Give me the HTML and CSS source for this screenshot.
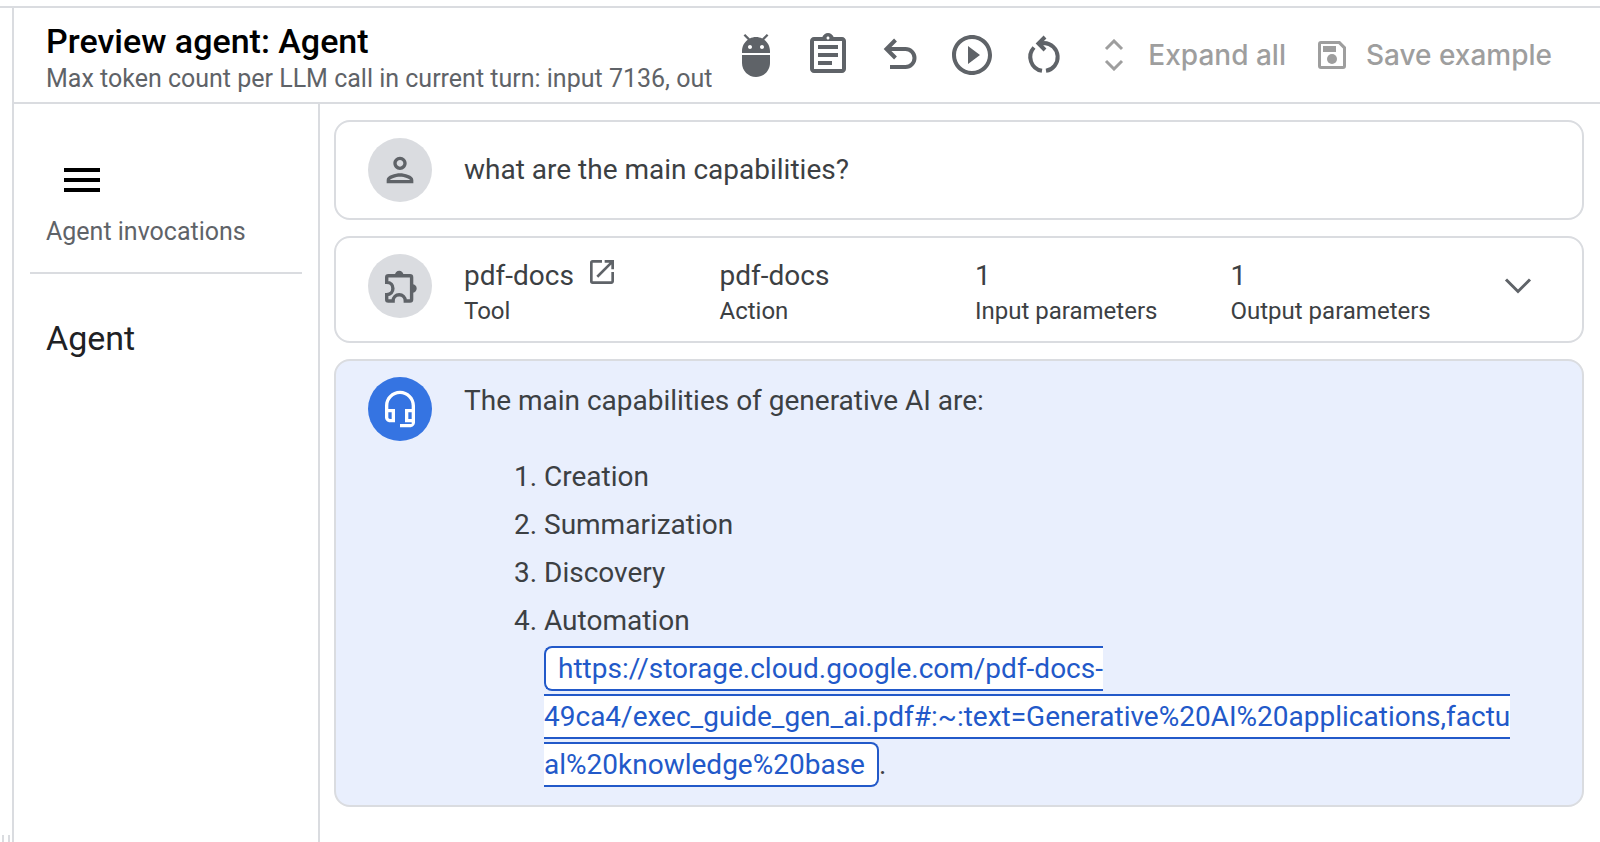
FILE: index.html
```html
<!DOCTYPE html>
<html lang="en">
<head>
<meta charset="utf-8">
<title>Preview agent</title>
<link rel="stylesheet" href="styles.css">
</head>
<body>
<div class="app">
  <div class="resizer"><span class="grip"></span></div>
  <div class="panel">
    <header class="header">
      <div class="heading">
        <h1 class="title">Preview agent: Agent</h1>
        <p class="subtitle">Max token count per LLM call in current turn: input 7136, out</p>
      </div>
      <div class="tools">
        <button class="icon-button" type="button" aria-label="Debug">
          <svg class="icon" viewBox="0 0 24 24"><path d="M5 16c0 3.87 3.13 7 7 7s7-3.13 7-7v-4H5v4zM16.12 4.37l2.1-2.1-.82-.83-2.3 2.31C14.16 3.28 13.12 3 12 3s-2.16.28-3.09.75L6.6 1.44l-.82.83 2.1 2.1C6.14 5.64 5 7.68 5 10v1h14v-1c0-2.32-1.14-4.36-2.88-5.63zM9 9c-.55 0-1-.45-1-1s.45-1 1-1 1 .45 1 1-.45 1-1 1zm6 0c-.55 0-1-.45-1-1s.45-1 1-1 1 .45 1 1-.45 1-1 1z"/></svg>
        </button>
        <button class="icon-button" type="button" aria-label="Original response">
          <svg class="icon" viewBox="0 0 24 24"><path d="M7 15h7v2H7zm0-4h10v2H7zm0-4h10v2H7zm12-4h-4.18C14.4 1.84 13.3 1 12 1c-1.3 0-2.4.84-2.82 2H5c-1.1 0-2 .9-2 2v14c0 1.1.9 2 2 2h14c1.1 0 2-.9 2-2V5c0-1.1-.9-2-2-2zm-7-.25c.41 0 .75.34.75.75s-.34.75-.75.75-.75-.34-.75-.75.34-.75.75-.75zM19 19H5V5h14v14z"/></svg>
        </button>
        <button class="icon-button" type="button" aria-label="Undo">
          <svg class="icon line" viewBox="0 0 48 48"><path d="M19.500 9l-9 9 9 9M11 18h18.500a9 9 0 0 1 0 18H14"/></svg>
        </button>
        <button class="icon-button" type="button" aria-label="Run">
          <svg class="icon" viewBox="0 0 24 24"><path d="M10 16.5l6-4.5-6-4.5v9zM12 2C6.48 2 2 6.48 2 12s4.48 10 10 10 10-4.48 10-10S17.52 2 12 2zm0 18c-4.41 0-8-3.59-8-8s3.59-8 8-8 8 3.59 8 8-3.59 8-8 8z"/></svg>
        </button>
        <button class="icon-button" type="button" aria-label="Restart">
          <svg class="icon line" viewBox="0 0 48 48"><path d="M24 12a14 14 0 0 1 2 27.800M22 39.800A14 14 0 0 1 14 16.500M25 6l-6.500 6.500 6.500 6.500M18 12.300h6"/></svg>
        </button>
        <button class="text-button" type="button" disabled>
          <svg class="small-icon line" viewBox="0 0 28 32"><path class="thin" d="M6 10l8-8 8 8M6 22l8 8 8-8"/></svg>
          <span>Expand all</span>
        </button>
        <button class="text-button" type="button" disabled>
          <svg class="small-icon" viewBox="0 0 28 32"><path fill-rule="evenodd" d="M3 2h19l6 6v19a3 3 0 0 1-3 3H3a3 3 0 0 1-3-3V5a3 3 0 0 1 3-3zm0 3v22h22V9.500L20.500 5zM5 7h13v6H5z"/><circle cx="14" cy="20" r="5"/></svg>
          <span>Save example</span>
        </button>
      </div>
    </header>
    <div class="body">
      <aside class="sidebar">
        <div class="sidebar-head">
          <button class="menu" type="button" aria-label="Menu">
            <svg class="menu-icon" viewBox="0 0 36 24"><path d="M0 0h36v4H0zM0 10h36v4H0zM0 20h36v4H0z"/></svg>
          </button>
          <p class="sidebar-label">Agent invocations</p>
        </div>
        <p class="sidebar-item">Agent</p>
      </aside>
      <main class="chat">
        <section class="card user">
          <span class="avatar"><svg class="avatar-icon" viewBox="0 0 24 24"><path d="M12 6c1.100 0 2 .9 2 2s-.9 2-2 2-2-.9-2-2 .9-2 2-2m0 10c2.700 0 5.800 1.290 6 2H6c.23-.72 3.310-2 6-2m0-12C9.790 4 8 5.790 8 8s1.790 4 4 4 4-1.790 4-4-1.790-4-4-4zm0 10c-2.670 0-8 1.340-8 4v2h16v-2c0-2.660-5.330-4-8-4z"/></svg></span>
          <p class="message">what are the main capabilities?</p>
        </section>
        <section class="card tool">
          <span class="avatar"><svg class="avatar-icon" viewBox="0 0 40 40"><path class="piece" d="M8.500 9.700H30q1.600 0 1.600 1.600V33.400q0 1.600-1.600 1.600H25.300C25.300 31 22.500 28.800 19.200 28.800S13.100 31 13.100 35H8.300q-1.600 0-1.600-1.600V28.600C10.700 28.600 12.900 25.800 12.900 22.500S10.700 16.400 6.700 16.400V11.300q0-1.600 1.800-1.600z"/><path d="M15 9a4.200 4.200 0 0 1 8.400 0zM32.500 18.300a4.200 4.200 0 0 1 0 8.400z"/></svg></span>
          <dl class="facts">
            <div class="fact"><dt>Tool</dt><dd class="linked">pdf-docs <a class="open" href="#" aria-label="Open tool"><svg class="open-icon" viewBox="0 0 24 24"><path d="M19 19H5V5h7V3H5a2 2 0 0 0-2 2v14a2 2 0 0 0 2 2h14c1.100 0 2-.9 2-2v-7h-2v7zM14 3v2h3.590l-9.830 9.830 1.410 1.410L19 6.410V10h2V3h-7z"/></svg></a></dd></div>
            <div class="fact"><dt>Action</dt><dd>pdf-docs</dd></div>
            <div class="fact"><dt>Input parameters</dt><dd>1</dd></div>
            <div class="fact"><dt>Output parameters</dt><dd>1</dd></div>
          </dl>
          <button class="icon-button" type="button" aria-label="Expand">
            <svg class="icon line" viewBox="0 0 48 48"><path class="chevron" d="M12 17.500L24 29.500 36 17.500"/></svg>
          </button>
        </section>
        <section class="card agent">
          <span class="avatar bot"><svg class="avatar-icon" viewBox="0 0 24 24"><path fill-rule="evenodd" d="M12 1c-4.970 0-9 4.030-9 9v7c0 1.660 1.340 3 3 3h3v-8H5v-2c0-3.870 3.130-7 7-7s7 3.130 7 7v2h-4v8h4v1h-7v2h6c1.660 0 3-1.340 3-3V10c0-4.970-4.030-9-9-9zM7 14v4H6c-.55 0-1-.45-1-1v-3h2zm12 4h-2v-4h2v4z"/></svg></span>
          <div class="message">
            <p>The main capabilities of generative AI are:</p>
            <ol class="list">
              <li>Creation</li>
              <li>Summarization</li>
              <li>Discovery</li>
              <li>Automation<br><a class="cite" href="#">https://storage.cloud.google.com/pdf-docs-<wbr>49ca4/exec_guide_gen_ai.pdf#:~:text=Generative%20AI%20applications,factu<wbr>al%20knowledge%20base</a>.</li>
            </ol>
          </div>
        </section>
      </main>
    </div>
  </div>
</div>
</body>
</html>
```
FILE: styles.css
```css
* { box-sizing: border-box; }
body {
  margin: 0;
  padding-top: 6px;
  font-family: Roboto, "Liberation Sans", sans-serif;
  font-size: 28px;
  color: #3c4043;
  background: #fff;
}
h1, p, dl, dd, ol { margin: 0; }
button {
  border: 0;
  padding: 0;
  background: none;
  font: inherit;
  color: inherit;
}
svg { display: block; fill: currentColor; flex: none; }
.line { fill: none; stroke: currentColor; stroke-width: 4; }
.thin { stroke-width: 3; }
.chevron { stroke-width: 3; }

.app {
  display: flex;
  height: calc(100vh - 6px);
  overflow: hidden;
  border-top: 2px solid #dadce0;
}
.resizer {
  display: flex;
  align-items: flex-end;
  width: 12px;
  padding-left: 2px;
}
.grip {
  width: 8px;
  height: 7px;
  border: solid #dadce0;
  border-width: 0 2px;
}
.panel {
  flex: 1;
  min-width: 0;
  display: flex;
  flex-direction: column;
  border-left: 2px solid #dadce0;
}

.header {
  display: flex;
  justify-content: space-between;
  align-items: center;
  gap: 12px;
  height: 96px;
  padding: 0 48px 0 32px;
  border-bottom: 2px solid #dadce0;
}
.heading {
  min-width: 0;
  padding-top: 8px;
  overflow: hidden;
  white-space: nowrap;
}
.title {
  font-size: 34px;
  line-height: 40px;
  font-weight: 500;
  color: #000;
}
.subtitle { font-size: 25px; line-height: 36px; color: #5f6368; }
.tools { display: flex; align-items: center; gap: 24px; color: #5f6368; }
.icon { width: 48px; height: 48px; }
.text-button {
  display: flex;
  align-items: center;
  gap: 20px;
  padding-left: 8px;
  font-family: Inter, Roboto, sans-serif;
  font-weight: 500;
  color: #9e9e9e;
  white-space: nowrap;
}
.small-icon { width: 28px; height: 32px; }

.body { flex: 1; display: flex; min-height: 0; }
.sidebar {
  flex: none;
  width: 306px;
  padding: 0 16px;
  border-right: 2px solid #dadce0;
}
.sidebar-head {
  padding: 64px 16px 24px;
  border-bottom: 2px solid #dadce0;
}
.menu { display: block; padding: 0 18px; color: #000; }
.menu-icon { width: 36px; height: 24px; }
.sidebar-label {
  margin-top: 24px;
  font-size: 25px;
  line-height: 32px;
  color: #5f6368;
}
.sidebar-item {
  padding: 44px 16px;
  font-size: 34px;
  line-height: 40px;
  color: #202124;
}

.chat {
  flex: 1;
  min-width: 0;
  display: flex;
  flex-direction: column;
  gap: 16px;
  padding: 16px 16px 16px 14px;
}
.card {
  display: flex;
  gap: 32px;
  padding: 16px 42px 16px 32px;
  border: 2px solid #dadce0;
  border-radius: 16px;
}
.avatar {
  display: flex;
  align-items: center;
  justify-content: center;
  flex: none;
  width: 64px;
  height: 64px;
  border-radius: 50%;
  background: #dadce0;
  color: #5f6368;
}
.bot { background: #3574e2; color: #fff; }
.avatar-icon { width: 40px; height: 40px; }
.piece { fill: none; stroke: currentColor; stroke-width: 3.4; }
.message { flex: 1; min-width: 0; line-height: 48px; }
.user { align-items: center; }

.tool { padding-right: 40px; padding-bottom: 15px; }
.tool .icon-button { align-self: flex-start; margin-top: 8px; color: #5f6368; }
.facts {
  flex: 1;
  display: grid;
  grid-template-columns: repeat(4, 1fr);
  margin-right: -24px;
  padding-top: 2px;
}
.fact {
  display: flex;
  flex-direction: column-reverse;
  justify-content: flex-end;
}
.fact dt { font-size: 24px; line-height: 30px; }
.fact dd { line-height: 40px; }
.linked { display: flex; gap: 12px; }
.open { color: #5f6368; }
.open-icon { width: 32px; height: 32px; }

.agent { background: #e9effd; }
.list { padding: 28px 0 0 80px; }
.cite {
  padding: 4px 12px;
  border: 2px solid #2259c9;
  border-radius: 8px;
  background: #fff;
  color: #2259c9;
  text-decoration: none;
  overflow-wrap: anywhere;
}
```
